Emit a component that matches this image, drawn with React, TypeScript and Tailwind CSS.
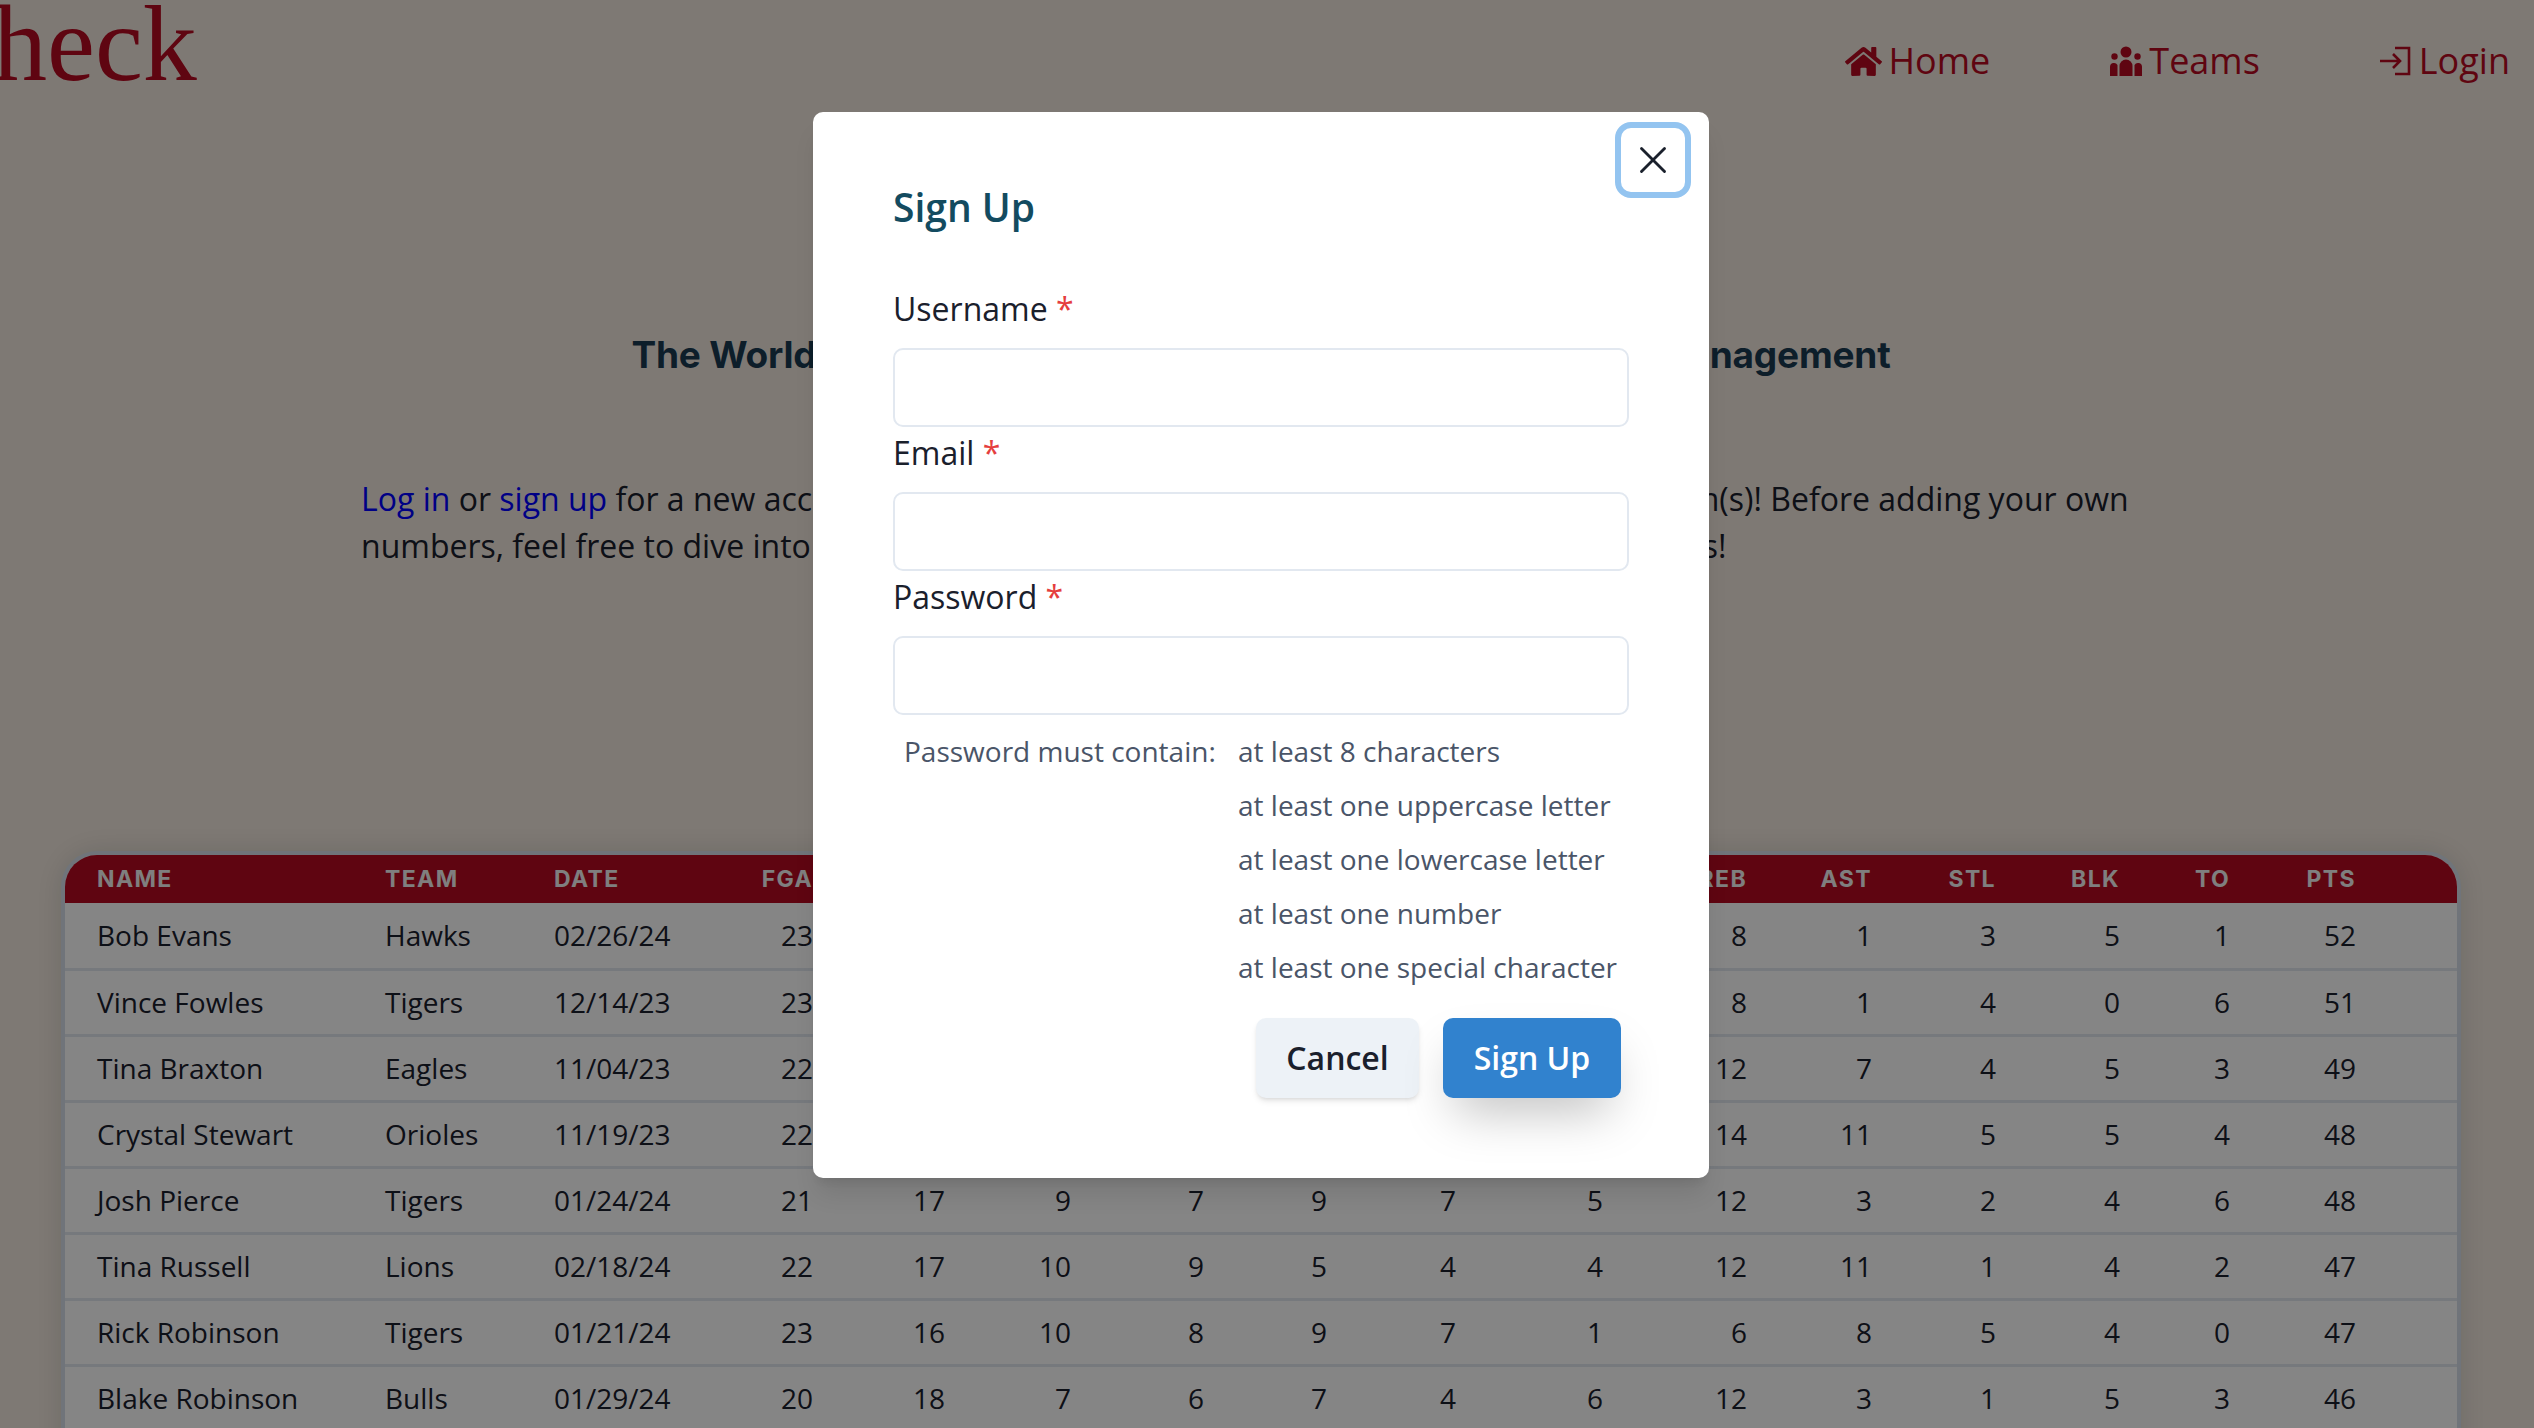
import { FaHome } from "react-icons/fa";
import { X } from "lucide-react";

const headers = ["Name", "Team", "Date", "FGA", "FGM", "3PA", "3PM", "FTA", "FTM", "OREB", "REB", "AST", "STL", "BLK", "TO", "PTS"];

const rows = [
  ["Bob Evans", "Hawks", "02/26/24", 23, 18, 9, 7, 9, 7, 2, 8, 1, 3, 5, 1, 52],
  ["Vince Fowles", "Tigers", "12/14/23", 23, 18, 10, 6, 9, 7, 3, 8, 1, 4, 0, 6, 51],
  ["Tina Braxton", "Eagles", "11/04/23", 22, 17, 9, 7, 8, 6, 4, 12, 7, 4, 5, 3, 49],
  ["Crystal Stewart", "Orioles", "11/19/23", 22, 17, 8, 6, 8, 8, 5, 14, 11, 5, 5, 4, 48],
  ["Josh Pierce", "Tigers", "01/24/24", 21, 17, 9, 7, 9, 7, 5, 12, 3, 2, 4, 6, 48],
  ["Tina Russell", "Lions", "02/18/24", 22, 17, 10, 9, 5, 4, 4, 12, 11, 1, 4, 2, 47],
  ["Rick Robinson", "Tigers", "01/21/24", 23, 16, 10, 8, 9, 7, 1, 6, 8, 5, 4, 0, 47],
  ["Blake Robinson", "Bulls", "01/29/24", 20, 18, 7, 6, 7, 4, 6, 12, 3, 1, 5, 3, 46],
  ["Sam Carter", "Hawks", "01/05/24", 20, 16, 8, 6, 7, 5, 2, 9, 4, 2, 3, 2, 45],
];

const rules = [
  "at least 8 characters",
  "at least one uppercase letter",
  "at least one lowercase letter",
  "at least one number",
  "at least one special character",
];

const TeamsIcon = () => (
  <svg width="32" height="30" viewBox="0 0 32 30" fill="currentColor">
    <circle cx="16" cy="6" r="5.5" />
    <circle cx="4.5" cy="10.5" r="3.2" />
    <circle cx="27.5" cy="10.5" r="3.2" />
    <path d="M9.5 30V20a6.5 6.5 0 0 1 13 0v10z" />
    <path d="M0 30v-9a4 4 0 0 1 7.5-2v11z" />
    <path d="M32 30v-9a4 4 0 0 0-7.5-2v11z" />
  </svg>
);

const LoginIcon = () => (
  <svg width="32" height="32" viewBox="0 0 32 32" fill="none" stroke="currentColor" strokeWidth="2.6">
    <path d="M0 16h20M13 9l7 7-7 7" />
    <path d="M15 3h14v26H15" />
  </svg>
);

const Field = ({ label }: { label: string }) => (
  <div>
    <label className="block h-[65px] pt-[2px] text-[32px] leading-[48px] text-[#1a202c]">
      {label} <span className="text-[#e53e3e]">*</span>
    </label>
    <input
      type="text"
      className="block h-[79px] w-full rounded-[10px] border-2 border-[#e2e8f0] bg-white px-6 outline-none"
    />
  </div>
);

const SignUpModal = () => (
  <div className="absolute inset-0 z-10 flex justify-center bg-black/48 pr-[12px]">
    <div className="relative mt-[112px] h-[1066px] w-[896px] rounded-[10px] bg-white px-[80px] pt-[65px] shadow-xl">
      <button
        type="button"
        className="absolute right-[18px] top-[10px] flex h-[76px] w-[76px] items-center justify-center rounded-[16px] border-[6px] border-[#93c4f0] text-[#1a202c]"
      >
        <X size={46} strokeWidth={1.5} />
      </button>
      <h2 className="h-[60px] text-[39px] font-semibold leading-[60px] text-[#134b60]">Sign Up</h2>
      <div className="mt-[46px]">
        <Field label="Username" />
        <Field label="Email" />
        <Field label="Password" />
      </div>
      <div className="mt-[9px] flex pl-[11px] text-[28px] leading-[54px] text-[#4a5568]">
        <div className="w-[334px]">Password must contain:</div>
        <ul>
          {rules.map((rule) => (
            <li key={rule}>{rule}</li>
          ))}
        </ul>
      </div>
      <div className="mt-[24px] flex justify-end gap-6 pr-2">
        <button
          type="button"
          className="h-[80px] w-[163px] rounded-[10px] bg-[#edf2f7] text-[32px] font-semibold text-[#1a202c] shadow-md"
        >
          Cancel
        </button>
        <button
          type="button"
          className="h-[80px] w-[178px] rounded-[10px] bg-[#3182ce] text-[32px] font-semibold text-white shadow-2xl"
        >
          Sign Up
        </button>
      </div>
    </div>
  </div>
);

const NavLink = ({ icon, label }: { icon: React.ReactNode; label: string }) => (
  <a className="flex items-center gap-[7px] text-[36px] leading-[54px] text-[#b70a21]">
    {icon}
    {label}
  </a>
);

const App = () => {
  return (
    <div className="relative h-[1428px] w-[2534px] overflow-hidden bg-[#f2e9df] font-['Open_Sans',sans-serif] text-[#1a202c]">
      <header className="flex h-[120px] justify-between">
        <div className="-ml-[7px] -mt-[16px] font-['Liberation_Serif',serif] text-[108px] leading-[120px] text-[#b70a21]">
          heck
        </div>
        <nav className="flex h-fit gap-[120px] pr-[24px] pt-[34px]">
          <NavLink icon={<FaHome size={37} />} label="Home" />
          <NavLink icon={<TeamsIcon />} label="Teams" />
          <NavLink icon={<LoginIcon />} label="Login" />
        </nav>
      </header>

      <h1 className="mt-[213px] pr-[12px] text-center font-['Inter',sans-serif] text-[37px] font-bold leading-[44px] tracking-[-0.005em] text-[#1a3a52]">
        The World's Leading Basketball Stats Tracking and Team Management
      </h1>

      <p className="ml-[361px] mt-[98px] w-[1812px] text-[32px] leading-[47px]">
        <a className="text-[#0000ff]">Log in</a> or <a className="text-[#0000ff]">sign up</a> for a new account to start
        tracking stats for all of the players on your team(s)! Before adding your own numbers, feel free to dive into the
        sample data and explore all the app's features, and stats!
      </p>

      <div className="ml-[61px] mr-[73px] mt-[282px] rounded-t-[36px] border-4 border-[#d6dfea] bg-white shadow-[0_0_30px_rgba(0,0,0,0.12)]">
        <table className="w-full table-fixed overflow-hidden rounded-t-[32px]">
          <colgroup>
            <col className="w-[288px]" />
            <col className="w-[169px]" />
            <col className="w-[182px]" />
            <col className="w-[141px]" />
            <col className="w-[132px]" />
            <col className="w-[126px]" />
            <col className="w-[133px]" />
            <col className="w-[123px]" />
            <col className="w-[129px]" />
            <col className="w-[147px]" />
            <col className="w-[144px]" />
            <col className="w-[125px]" />
            <col className="w-[124px]" />
            <col className="w-[124px]" />
            <col className="w-[110px]" />
            <col className="w-[126px]" />
            <col />
          </colgroup>
          <thead>
            <tr className="h-[48px] bg-[#b70a21] font-['Inter',sans-serif] text-[23px] uppercase tracking-[0.06em] text-[#f4f4f4]">
              {headers.map((h, i) => (
                <th key={h} className={i < 3 ? "px-8 text-left font-bold" : "px-8 text-right font-bold"}>
                  {h}
                </th>
              ))}
              <th />
            </tr>
          </thead>
          <tbody className="text-[28px]">
            {rows.map((row) => (
              <tr key={row[0] as string} className="h-[66px] border-b-[3px] border-[#e2e8f0]">
                {row.map((v, i) => (
                  <td key={i} className={i < 3 ? "px-8 text-left" : "px-8 text-right"}>
                    {v}
                  </td>
                ))}
                <td />
              </tr>
            ))}
          </tbody>
        </table>
      </div>

      <SignUpModal />
    </div>
  );
};

export default App;
